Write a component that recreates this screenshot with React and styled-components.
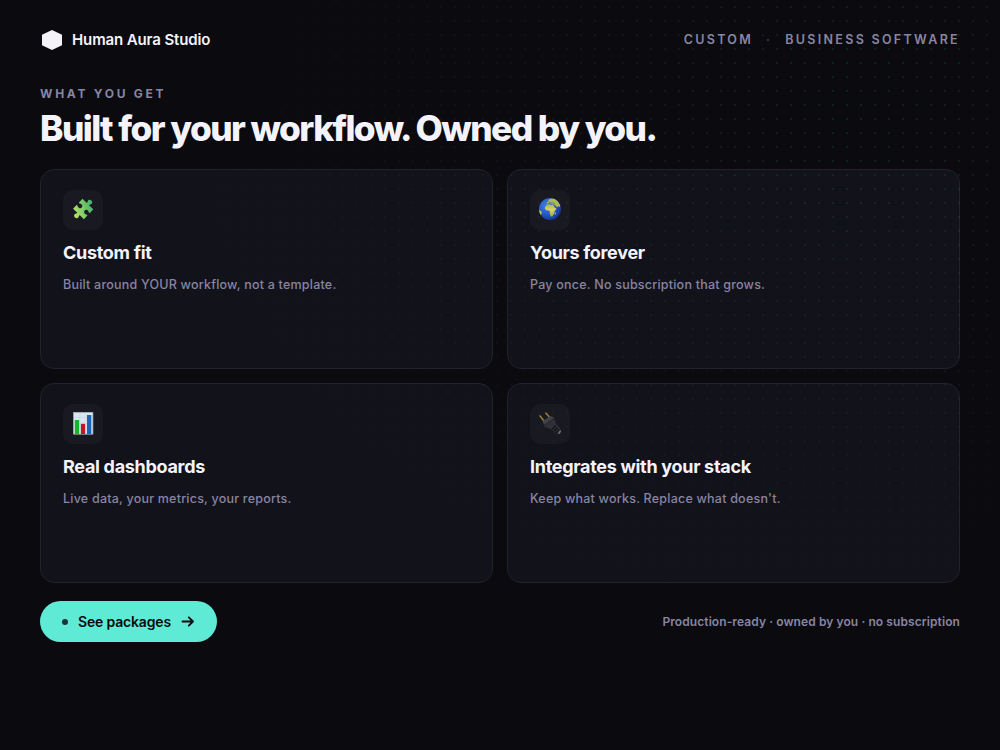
import styled, { createGlobalStyle } from "styled-components";

const GlobalStyle = createGlobalStyle`
  * {
    box-sizing: border-box;
  }

  body {
    margin: 0;
    background: #0a0a0f;
    color: #f4f3fa;
    font-family: Inter, "Liberation Sans", sans-serif;
    -webkit-font-smoothing: antialiased;
  }
`;

const Page = styled.div`
  position: relative;
  width: 1000px;
  height: 750px;
  padding: 28px 40px 0;
  overflow: hidden;
  background: #0a0a0f;
`;

const DotGrid = styled.div`
  position: absolute;
  inset: 0;
  pointer-events: none;
  background-image: radial-gradient(
    circle,
    rgba(94, 234, 212, 0.1) 1px,
    transparent 1.2px
  );
  background-size: 14px 14px;
  mask-image: radial-gradient(
    ellipse 70% 70% at 85% 15%,
    #000 0%,
    transparent 100%
  );
`;

const Header = styled.header`
  display: flex;
  align-items: center;
  justify-content: space-between;
  height: 24px;
`;

const Brand = styled.div`
  display: flex;
  align-items: center;
  gap: 8px;
  font-size: 15px;
  font-weight: 600;
  line-height: 24px;
  letter-spacing: -0.12px;
`;

const Tags = styled.div`
  display: flex;
  align-items: center;
  gap: 13px;
  color: #8885a2;
  font-size: 12.5px;
  font-weight: 600;
  line-height: 20px;
  letter-spacing: 2.3px;
  text-transform: uppercase;

  i {
    color: #3f3e4c;
    font-style: normal;
  }
`;

const Eyebrow = styled.div`
  margin-top: 34px;
  color: #8885a2;
  font-size: 12px;
  font-weight: 700;
  line-height: 16px;
  letter-spacing: 2.72px;
  text-transform: uppercase;
`;

const Heading = styled.h1`
  margin: 7px 0 0;
  font-size: 35.3px;
  font-weight: 800;
  line-height: 40px;
  letter-spacing: -1.57px;
  word-spacing: 0.1px;
  white-space: nowrap;
`;

const Grid = styled.main`
  display: grid;
  grid-template-columns: 1fr 1fr;
  grid-auto-rows: 200px;
  gap: 14px;
  margin-top: 20px;
`;

const Card = styled.section`
  padding: 20px 22px;
  border: 1px solid #22222c;
  border-radius: 14px;
  background: #12121a;
`;

const IconTile = styled.div`
  display: flex;
  align-items: center;
  justify-content: center;
  width: 40px;
  height: 40px;
  border-radius: 10px;
  background: #191921;
`;

const CardTitle = styled.h2`
  margin: 11px 0 0;
  font-size: 18px;
  font-weight: 700;
  line-height: 24px;
  letter-spacing: -0.3px;
`;

const CardText = styled.p`
  margin: 10px 0 0;
  color: #8885a2;
  font-size: 12.5px;
  font-weight: 500;
  line-height: 20px;
  letter-spacing: 0.22px;
`;

const Footer = styled.footer`
  display: flex;
  align-items: center;
  justify-content: space-between;
  margin-top: 18px;
`;

const PackagesButton = styled.button`
  display: flex;
  align-items: center;
  height: 41px;
  padding: 0 22px;
  border: 0;
  border-radius: 999px;
  background: #5eead4;
  color: #0a0a0f;
  font-family: inherit;
  font-size: 14px;
  font-weight: 600;
  letter-spacing: -0.17px;

  &::before {
    content: "";
    width: 6px;
    height: 6px;
    margin-right: 10px;
    border-radius: 50%;
    background: #1b3437;
  }

  svg {
    margin-left: 10px;
  }
`;

const Note = styled.div`
  color: #8885a2;
  font-size: 12px;
  font-weight: 600;
  letter-spacing: 0.09px;
`;

const HexLogo = () => (
  <svg width="24" height="24" viewBox="0 0 24 24">
    <path d="M12 2 22 6.8V17.2L12 22 2 17.2V6.8Z" fill="#f4f3fa" />
  </svg>
);

const PuzzleIcon = () => (
  <svg width="24" height="24" viewBox="0 0 24 24">
    <defs>
      <linearGradient
        id="puzzle"
        gradientUnits="userSpaceOnUse"
        x1="5"
        y1="-9"
        x2="-5"
        y2="9"
      >
        <stop offset="0" stopColor="#45ad70" />
        <stop offset="0.5" stopColor="#7bc969" />
        <stop offset="1" stopColor="#b9e463" />
      </linearGradient>
    </defs>
    <path
      transform="translate(12.2 11) rotate(44) scale(1.18 1.06)"
      d="M-6.4-6.4H-1.6C-.9-6.7-1.5-7.7-1.9-8.4C-2.5-10-1.4-11.2 0-11.2S2.5-10 1.9-8.4C1.5-7.7.9-6.7 1.6-6.4H6.4V-1.7C6.1-1 5.2-1.5 4.5-1.9C3-2.4 1.7-1.4 1.7 0S3 2.4 4.5 1.9C5.2 1.5 6.1 1 6.4 1.7V6.4H1.6C.9 6.7 1.5 7.7 1.9 8.4C2.5 10 1.4 11.2 0 11.2S-2.5 10-1.9 8.4C-1.5 7.7-.9 6.7-1.6 6.4H-6.4V1.7C-6.1 1-5.2 1.5-4.5 1.9C-3 2.4-1.7 1.4-1.7 0S-3-2.4-4.5-1.9C-5.2-1.5-6.1-1-6.4-1.7Z"
      fill="url(#puzzle)"
    />
  </svg>
);

const GlobeIcon = () => (
  <svg width="24" height="24" viewBox="0 0 24 24">
    <defs>
      <radialGradient id="ocean" cx="0.35" cy="0.35" r="0.7">
        <stop offset="0" stopColor="#3e83e4" />
        <stop offset="0.6" stopColor="#2456c4" />
        <stop offset="1" stopColor="#15358e" />
      </radialGradient>
      <linearGradient id="land" x1="0" y1="0" x2="0" y2="1">
        <stop offset="0" stopColor="#a5b84c" />
        <stop offset="0.45" stopColor="#ddd06b" />
        <stop offset="1" stopColor="#9cad4c" />
      </linearGradient>
      <clipPath id="globe-clip">
        <circle cx="12" cy="11" r="11" />
      </clipPath>
    </defs>
    <circle cx="12" cy="11" r="11" fill="url(#ocean)" />
    <g clipPath="url(#globe-clip)">
      <path
        d="M9.1 5.7 8.6 4.3 10.6 3.6 10.2 2.2 12.2.8 16.3.6 20.2 3.5 22.4 7.4 21.5 9.2 20.3 7.9 19.2 9.4 17.5 7.6 16.3 6.7 14.8 6.5 14 5.5 12.8 5.9 11.6 4.8Z"
        fill="#aebb51"
      />
      <path
        d="M8.1 7.4 10.3 6.2 12.8 6.7 15.5 7.1 16.7 9.4 18.6 10.7 16.5 13.2 16.4 15.3 14.5 18.3 12.6 18.5 11.8 15.5 11.5 12.7 8.3 12.2 6.7 10.2Z"
        fill="url(#land)"
      />
      <path d="m17.1 14.6.9-.6-.4 2.7-.9.6Z" fill="#b1bc57" />
      <path d="M.7 11.7 3.2 13.2 3.8 15 2.9 17 0 16Z" fill="#c5c45b" />
      <path
        d="m10.7 4.9 1.2-.9 1.3 1 1.7-.3 2.2 1.1"
        fill="none"
        stroke="#315f9c"
        strokeWidth=".6"
      />
    </g>
  </svg>
);

const ChartIcon = () => (
  <svg width="24" height="24" viewBox="0 0 24 24">
    <path d="M2.5.3H21.9V22.2H2.5Z" fill="#dae5ef" />
    <path
      d="M3 5.5H21M3 10.8H21M3 16.5H21M8.9.5V21.5M15 .5V21.5"
      stroke="#c5d0dc"
      strokeWidth=".5"
    />
    <path d="M2.5.3H21.9V22.2H2.5Z" fill="none" stroke="#a7b1bd" strokeWidth=".7" />
    <path d="M3.8 8H8.1V22H3.8Z" fill="#16b52a" />
    <path d="M9.9 11.8H14.1V22H9.9Z" fill="#c3142b" />
    <path d="M16 3H20.3V22H16Z" fill="#1765c1" />
  </svg>
);

const PlugIcon = () => (
  <svg width="24" height="24" viewBox="0 0 24 24">
    <path
      d="M1.8 3.5 6.2 9M7.6.7 12.2 5.9"
      fill="none"
      stroke="#5e4d20"
      strokeWidth="2"
    />
    <path
      d="M1.6 3.5 6 9M7.4.7 12 5.9"
      fill="none"
      stroke="#b99c3d"
      strokeWidth="1"
    />
    <path
      d="M4.3 9.5 12.3 4.3 15.9 5.3 18.2 12.6 20.8 14.6 23.3 19.4 20.5 22.2 16 20 13.8 17.4 6.8 14.9Z"
      fill="#303136"
    />
    <path d="M4.3 9.5 12.3 4.3 15.9 5.3 6.2 12.2Z" fill="#444448" />
    <path d="M7.4 13.2 16 7.3" stroke="#242529" strokeWidth=".8" />
    <path
      d="m14.3 17.2 3.2-3.4M16.2 19.2l3.3-3.5M18.2 20.8l3.1-3.2"
      stroke="#101116"
      strokeWidth="1.3"
    />
    <path d="m19.8 21.3 2.4-3.4 1 1.6-1.7 2.4Z" fill="#6d6d70" />
  </svg>
);

const ArrowIcon = () => (
  <svg width="14" height="14" viewBox="0 0 14 14">
    <path
      d="M1.5 6.5H12M7.8 2.3 12 6.5 7.8 10.7"
      fill="none"
      stroke="currentColor"
      strokeWidth="1.8"
      strokeLinecap="round"
      strokeLinejoin="round"
    />
  </svg>
);

const features = [
  {
    icon: PuzzleIcon,
    title: "Custom fit",
    text: "Built around YOUR workflow, not a template.",
  },
  {
    icon: GlobeIcon,
    title: "Yours forever",
    text: "Pay once. No subscription that grows.",
  },
  {
    icon: ChartIcon,
    title: "Real dashboards",
    text: "Live data, your metrics, your reports.",
  },
  {
    icon: PlugIcon,
    title: "Integrates with your stack",
    text: "Keep what works. Replace what doesn't.",
  },
];

const App = () => (
  <>
    <GlobalStyle />
    <Page>
      <Header>
        <Brand>
          <HexLogo />
          Human Aura Studio
        </Brand>
        <Tags>
          <span>Custom</span>
          <i>·</i>
          <span>Business software</span>
        </Tags>
      </Header>

      <Eyebrow>What you get</Eyebrow>
      <Heading>Built for your workflow. Owned by you.</Heading>

      <Grid>
        {features.map(({ icon: Icon, title, text }) => (
          <Card key={title}>
            <IconTile>
              <Icon />
            </IconTile>
            <CardTitle>{title}</CardTitle>
            <CardText>{text}</CardText>
          </Card>
        ))}
      </Grid>

      <Footer>
        <PackagesButton type="button">
          See packages
          <ArrowIcon />
        </PackagesButton>
        <Note>Production-ready · owned by you · no subscription</Note>
      </Footer>
      <DotGrid />
    </Page>
  </>
);

export default App;
